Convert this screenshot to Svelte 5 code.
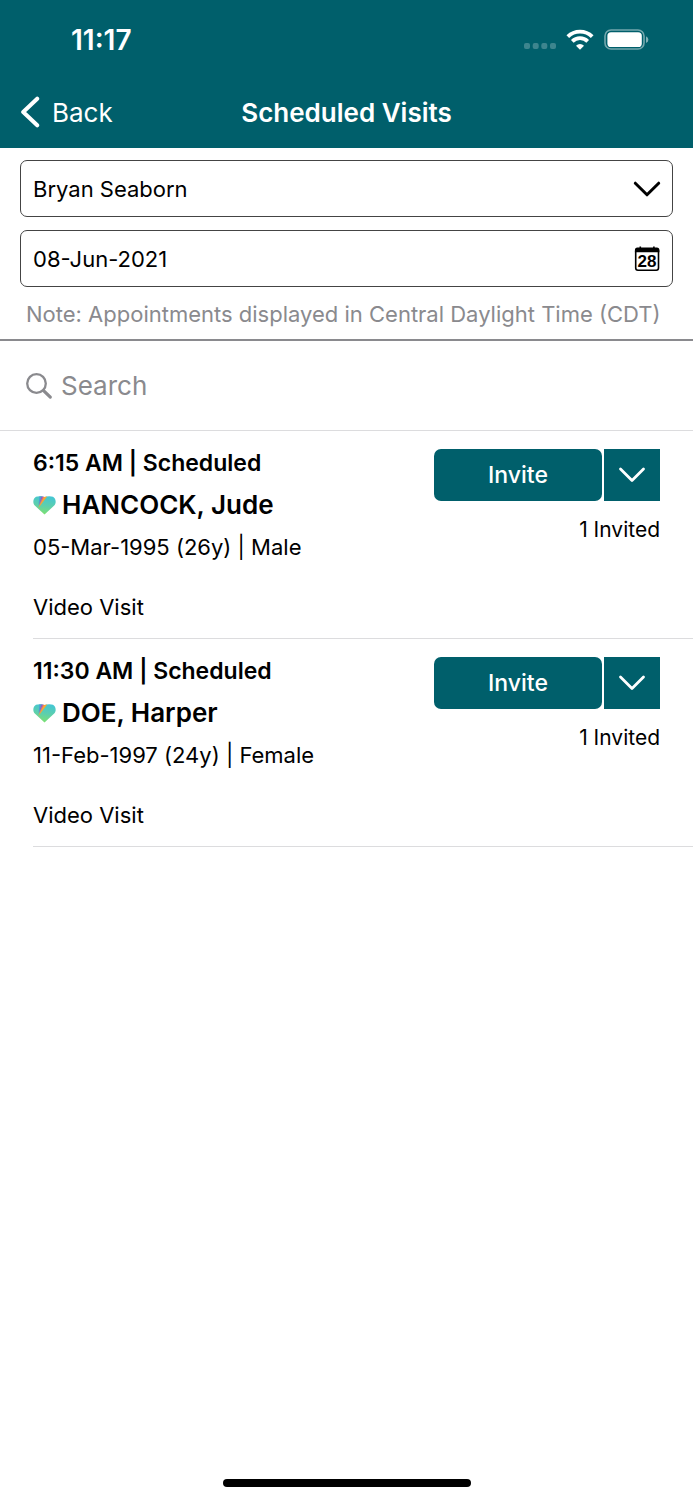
<script>
  const providers = ['Bryan Seaborn'];
  let provider = $state('Bryan Seaborn');
  let date = $state('08-Jun-2021');
  let query = $state('');

  const visits = [
    { time: '6:15 AM', status: 'Scheduled', name: 'HANCOCK, Jude', details: '05-Mar-1995 (26y) | Male', type: 'Video Visit', invited: 1 },
    { time: '11:30 AM', status: 'Scheduled', name: 'DOE, Harper', details: '11-Feb-1997 (24y) | Female', type: 'Video Visit', invited: 1 }
  ];
</script>

<div class="screen">
  <header>
    <div class="status">
      <span class="clock">11:17</span>
      <div class="indicators">
        <svg width="32" height="24" viewBox="0 0 32 24" aria-hidden="true">
          <g fill="#fff" opacity=".24">
            <rect x="0" y="15" width="6" height="6" rx="2" />
            <rect x="8.7" y="15" width="6" height="6" rx="2" />
            <rect x="17.3" y="15" width="6" height="6" rx="2" />
            <rect x="26" y="15" width="6" height="6" rx="2" />
          </g>
        </svg>
        <svg width="28" height="22" viewBox="0 0 28 22" aria-hidden="true">
          <g fill="none" stroke="#fff" stroke-width="3.8">
            <path d="M1.8 7.6a17.4 17.4 0 0 1 24.4 0" />
            <path d="M6.3 12.3a11 11 0 0 1 15.4 0" />
          </g>
          <path d="M14 20.7l-4-4a5.8 5.8 0 0 1 8 0z" fill="#fff" />
        </svg>
        <svg width="45" height="22" viewBox="0 0 45 22" aria-hidden="true">
          <rect x="1" y="1" width="39" height="19" rx="6" fill="none" stroke="#fff" stroke-width="1.6" opacity=".45" />
          <rect x="3.4" y="3.2" width="34.4" height="14.8" rx="3.6" fill="#fff" />
          <path d="M42 7.3q2.4 1.2 2.4 3.4T42 14z" fill="#fff" opacity=".5" />
        </svg>
      </div>
    </div>
    <nav>
      <a class="back" href="#back">
        <svg width="20" height="32" viewBox="0 0 20 32" aria-hidden="true">
          <path d="M17.2 2.7L3.2 16l14 13.3" fill="none" stroke="#fff" stroke-width="4" stroke-linecap="round" stroke-linejoin="round" />
        </svg>
        Back
      </a>
      <h1>Scheduled Visits</h1>
    </nav>
  </header>

  <section class="filters">
    <label class="field">
      <select bind:value={provider} aria-label="Provider">
        {#each providers as p}<option>{p}</option>{/each}
      </select>
      <svg width="28" height="18" viewBox="0 0 28 18" aria-hidden="true">
        <path d="M2.3 3.2L14 14.8 25.7 3.2" fill="none" stroke="#000" stroke-width="3" stroke-linecap="round" stroke-linejoin="round" />
      </svg>
    </label>
    <label class="field">
      <input type="text" bind:value={date} aria-label="Date" />
      <svg width="28" height="28" viewBox="0 0 28 28" aria-hidden="true">
        <rect x="2.7" y="4" width="22.8" height="21.3" rx="2.2" fill="none" stroke="#000" stroke-width="1.6" />
        <path d="M1.9 7.3V5q0-2.500 2.500-2.500H6.500V1.500h1.600v1h12V1.500h1.600v1h2.200q2.500 0 2.500 2.500v2.300z" />
        <text x="14" y="22" text-anchor="middle" font-size="17" font-weight="700" font-family="Liberation Sans, sans-serif">28</text>
      </svg>
    </label>
    <p>Note: Appointments displayed in Central Daylight Time (CDT)</p>
  </section>

  <label class="search">
    <svg width="28" height="28" viewBox="0 0 28 28" aria-hidden="true">
      <g fill="none" stroke="#8a8a8e" stroke-linecap="round">
        <circle cx="11.5" cy="11.5" r="9.3" stroke-width="2.3" />
        <path d="M18.8 18.8l6.500 6.300" stroke-width="3.2" />
      </g>
    </svg>
    <input type="text" placeholder="Search" aria-label="Search" bind:value={query} />
  </label>

  <main>
    {#each visits as visit, i}
      <article>
        <div class="info">
          <p class="when">{visit.time} | {visit.status}</p>
          <h2>
            <svg width="23" height="19" viewBox="0 0 23 19" aria-hidden="true">
              <defs>
                <linearGradient id="heart-{i}" x1=".6" y1="0" x2=".4" y2="1">
                  <stop offset="0" stop-color="#43c6d4" />
                  <stop offset=".5" stop-color="#5dcfad" />
                  <stop offset="1" stop-color="#80e36c" />
                </linearGradient>
                <clipPath id="clip-{i}">
                  <path d="M11.5 18.5L1.8 9.600C-.6 7 0 2.400 3 .8 5 0 9 0 11.5 1 14 0 18 0 20 .8c3 1.600 3.600 6.200 1.200 8.800z" />
                </clipPath>
              </defs>
              <g clip-path="url(#clip-{i})">
                <rect width="23" height="19" fill="url(#heart-{i})" />
                <path d="M5.500 9L6.500 0H9z" fill="#4c9fd6" />
                <path d="M5.500 10L8.500 0h2z" fill="#8a5fc4" />
                <path d="M5.500 11L10 0h2z" fill="#e8607c" />
                <path d="M5 12.500L11.300 0H14.500z" fill="#fba531" />
              </g>
            </svg>
            {visit.name}
          </h2>
          <p>{visit.details}</p>
          <p class="type">{visit.type}</p>
        </div>
        <div class="actions">
          <div class="split">
            <button class="invite">Invite</button>
            <button class="more" aria-label="More invite options">
              <svg width="28" height="18" viewBox="0 0 28 18" aria-hidden="true">
                <path d="M2.5 3L14 14.5 25.5 3" fill="none" stroke="#fff" stroke-width="2.8" stroke-linecap="round" stroke-linejoin="round" />
              </svg>
            </button>
          </div>
          <span>{visit.invited} Invited</span>
        </div>
      </article>
    {/each}
  </main>

  <footer><div class="home"></div></footer>
</div>

<style>
  :global(body) {
    margin: 0;
    background: #fff;
  }
  .screen {
    display: flex;
    flex-direction: column;
    min-height: 100vh;
    font-family: Inter, "Liberation Sans", sans-serif;
    font-size: 22px;
    color: #000;
  }
  .screen * {
    box-sizing: border-box;
  }
  p, h1, h2 {
    margin: 0;
  }
  input, select, button {
    font: inherit;
    color: inherit;
    border: 0;
    background: none;
    padding: 0;
    margin: 0;
    min-width: 0;
    outline: none;
  }
  header {
    background: #005f6b;
    color: #fff;
  }
  .status {
    display: flex;
    justify-content: space-between;
    align-items: center;
    height: 80px;
    padding: 0 44px 0 71px;
  }
  .clock {
    font-size: 28px;
    font-weight: 600;
  }
  .indicators {
    display: flex;
    align-items: center;
    gap: 10px;
  }
  nav {
    display: grid;
    grid-template-columns: 1fr auto 1fr;
    align-items: center;
    height: 68px;
    padding: 0 20px 4px;
    font-size: 26px;
  }
  .back {
    display: flex;
    align-items: center;
    gap: 12px;
    color: #fff;
    text-decoration: none;
  }
  h1 {
    font-size: 26px;
    font-weight: 600;
  }
  .filters {
    display: flex;
    flex-direction: column;
    gap: 13px;
    padding: 12px 20px 0;
    border-bottom: 2px solid #8a8a8e;
  }
  .field {
    display: flex;
    align-items: center;
    height: 57px;
    padding: 0 11px 0 12px;
    border: 1px solid #444;
    border-radius: 7px;
  }
  .field select, .field input {
    flex: 1;
    height: 100%;
    appearance: none;
  }
  .filters p {
    height: 39px;
    padding: 0 6px;
    line-height: 28px;
    color: #8a8a8e;
    white-space: nowrap;
  }
  .search {
    display: flex;
    align-items: center;
    gap: 8px;
    height: 90px;
    padding: 0 25px;
    border-bottom: 1px solid #dcdcde;
    font-size: 26px;
  }
  .search input {
    flex: 1;
  }
  .search input::placeholder {
    color: #8a8a8e;
    opacity: 1;
  }
  main {
    flex: 1;
    padding-left: 33px;
  }
  article {
    display: flex;
    justify-content: space-between;
    padding: 11px 33px 10px 0;
    border-bottom: 1px solid #dcdcde;
    line-height: 42px;
  }
  .when {
    font-size: 23px;
    font-weight: 600;
  }
  h2 {
    display: flex;
    align-items: center;
    gap: 6px;
    font-size: 26px;
    font-weight: 600;
  }
  .type {
    margin-top: 18px;
  }
  .actions {
    display: flex;
    flex-direction: column;
    align-items: flex-end;
    gap: 8px;
    padding-top: 7px;
    font-size: 21px;
  }
  .split {
    display: flex;
    gap: 2px;
  }
  .invite, .more {
    height: 52px;
    background: #005f6b;
    color: #fff;
  }
  .invite {
    width: 168px;
    border-radius: 7px;
    font-size: 23px;
    font-weight: 500;
  }
  .more {
    display: grid;
    place-items: center;
    width: 56px;
  }
  footer {
    display: flex;
    justify-content: center;
    padding-bottom: 13px;
  }
  .home {
    width: 248px;
    height: 8px;
    border-radius: 4px;
    background: #000;
  }
</style>
